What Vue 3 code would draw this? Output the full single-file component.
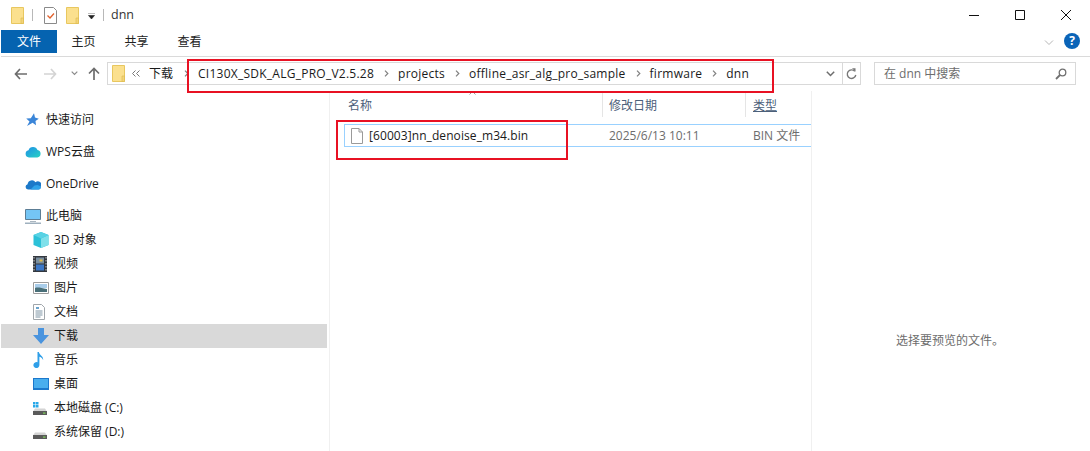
<script setup>
const crumbs = ['CI130X_SDK_ALG_PRO_V2.5.28', 'projects', 'offline_asr_alg_pro_sample', 'firmware', 'dnn']
const tabs = ['主页', '共享', '查看']
const thisPc = [
  { key: 'cube', label: '3D 对象' },
  { key: 'video', label: '视频' },
  { key: 'pic', label: '图片' },
  { key: 'doc', label: '文档' },
  { key: 'down', label: '下载', active: true },
  { key: 'music', label: '音乐' },
  { key: 'desk', label: '桌面' },
  { key: 'c', label: '本地磁盘 (C:)' },
  { key: 'd', label: '系统保留 (D:)' },
]
</script>

<template>
  <div class="win">
    <header class="title">
      <svg class="ti" width="13" height="17" viewBox="0 0 13 17"><path d="M.5.5h12v16H.5z" fill="#fbe08e" stroke="#e8c75f"/><path d="M10 11h2.500v5.500H10z" fill="#f3d478" stroke="#dcb84f" stroke-width=".6"/></svg>
      <i class="tsep"></i>
      <svg class="ti t2" width="13" height="17" viewBox="0 0 13 17"><path d="M.5.500h9l3 3v13H.5z" fill="#fff" stroke="#8a8a8a"/><path d="M3.500 8.500l2.500 2.500 4-4.500" fill="none" stroke="#e2602b" stroke-width="1.300"/></svg>
      <svg class="ti t3" width="13" height="17" viewBox="0 0 13 17"><path d="M.5.5h12v16H.5z" fill="#fbe08e" stroke="#e8c75f"/><path d="M10 11h2.500v5.500H10z" fill="#f3d478" stroke="#dcb84f" stroke-width=".6"/></svg>
      <svg class="ti t4" width="7" height="6" viewBox="0 0 7 6"><path d="M0 0h7M.5 2.500h6L3.500 6z" fill="#222" stroke="#222" stroke-width=".6"/></svg>
      <i class="tsep s2"></i>
      <span class="tname">dnn</span>
      <span class="grow"></span>
      <div class="wbtns">
        <svg width="12" height="12" viewBox="0 0 12 12"><path d="M1 6.500h10" stroke="#111"/></svg>
        <svg width="12" height="12" viewBox="0 0 12 12"><path d="M1.500 1.500h9v9h-9z" fill="none" stroke="#111"/></svg>
        <svg width="12" height="12" viewBox="0 0 12 12"><path d="M1 1l10 10M11 1L1 11" stroke="#111" stroke-width="1"/></svg>
      </div>
    </header>

    <nav class="tabs">
      <span class="file-tab">文件</span>
      <span v-for="t in tabs" :key="t" class="tab">{{ t }}</span>
      <span class="grow"></span>
      <svg class="collapse" width="10" height="6" viewBox="0 0 10 6"><path d="M1 .5l4 4 4-4" fill="none" stroke="#b5b5b5"/></svg>
      <span class="help">?</span>
    </nav>

    <div class="addr-row">
      <div class="navs">
        <svg width="13" height="12" viewBox="0 0 13 12"><path d="M6 1L1.500 6 6 11M2 6h11" fill="none" stroke="#6d6d6d" stroke-width="1.700"/></svg>
        <svg class="fw" width="13" height="12" viewBox="0 0 13 12"><path d="M7 1l4.500 5L7 11M11 6H0" fill="none" stroke="#d4d4d4" stroke-width="1.700"/></svg>
        <svg class="dd" width="7" height="5" viewBox="0 0 7 5"><path d="M.7.700l2.800 2.800L6.300.7" fill="none" stroke="#8a8a8a" stroke-width="1.200"/></svg>
        <svg class="up" width="12" height="13" viewBox="0 0 12 13"><path d="M1 6.500L6 1.500l5 5M6 2v11" fill="none" stroke="#6d6d6d" stroke-width="1.700"/></svg>
      </div>
      <div class="addr">
        <svg class="afold" width="13" height="17" viewBox="0 0 13 17"><path d="M.5.5h12v16H.5z" fill="#fbe08e" stroke="#e8c75f"/><path d="M10 11h2.500v5.500H10z" fill="#f3d478" stroke="#dcb84f" stroke-width=".6"/></svg>
        <svg class="more" width="8" height="7" viewBox="0 0 8 7"><path d="M3.500.5l-3 3 3 3M7.500.5l-3 3 3 3" fill="none" stroke="#777" stroke-width="1"/></svg>
        <span class="crumb first">下载</span>
        <template v-for="c in crumbs" :key="c">
          <svg class="chev" width="5" height="7" viewBox="0 0 5 7"><path d="M1 .7l2.800 2.800L1 6.300" fill="none" stroke="#808080" stroke-width="1.200"/></svg>
          <span class="crumb">{{ c }}</span>
        </template>
        <span class="grow"></span>
        <svg class="addr-dd" width="9" height="6" viewBox="0 0 9 6"><path d="M.8.800L4.500 4.500 8.200.8" fill="none" stroke="#6d6d6d" stroke-width="1.500"/></svg>
        <span class="refresh">
          <svg width="11" height="12" viewBox="0 0 11 12"><path d="M8.800 3.300A4.300 4.300 0 1 0 9.800 7" fill="none" stroke="#777" stroke-width="1.400"/><path d="M6 .3l3.500 0v3.500z" fill="#777"/></svg>
        </span>
      </div>
      <div class="search">
        <span>在 dnn 中搜索</span>
        <svg width="12" height="12" viewBox="0 0 12 12"><circle cx="7.500" cy="4.500" r="3.300" fill="none" stroke="#707070" stroke-width="1.300"/><path d="M5 7l-4 4" stroke="#707070" stroke-width="1.800"/></svg>
      </div>
    </div>

    <div class="main">
      <aside class="side">
        <div class="row top">
          <svg class="ic" width="14" height="14" viewBox="0 0 14 14"><path d="M9 .3l1 4.200 3.800 1.200-3.300 2.300.5 4.300-3.400-2.600L2 13l2.500-4.500L1.200 5.400l4.600-.2z" fill="#3a85d8"/></svg>
          <span>快速访问</span>
        </div>
        <div class="row top">
          <svg class="ic" width="16" height="14" viewBox="0 0 16 14"><defs><linearGradient id="wps" x1="0" y1="0" x2="1" y2="1"><stop offset="0" stop-color="#1f8fe8"/><stop offset="1" stop-color="#27d3c3"/></linearGradient></defs><path d="M4 12.500a3.700 3.700 0 0 1-.5-7.300A4.800 4.800 0 0 1 12.500 5a3.800 3.800 0 0 1-.2 7.500z" fill="url(#wps)"/></svg>
          <span>WPS云盘</span>
        </div>
        <div class="row top">
          <svg class="ic" width="16" height="11" viewBox="0 0 16 11"><path d="M3 10.500a2.700 2.700 0 0 1-.4-5.300A4.300 4.300 0 0 1 10.500 3.300 3.400 3.400 0 0 1 15.800 7.500c.3 1.500-.6 3-2.300 3z" fill="#1c79c9"/><path d="M5.500 10.500L9.500 6.500l3-.5 3.300 1.500c.3 1.500-.6 3-2.300 3z" fill="#2fa3ea"/></svg>
          <span>OneDrive</span>
        </div>
        <div class="row top">
          <svg class="ic" width="16" height="15" viewBox="0 0 16 15"><path d="M.5.500h15v10H.5z" fill="#74c5f5" stroke="#5c7d95"/><path d="M5 12h6v1H5z" fill="#aab6c0"/><path d="M0 13.500h16V15H0z" fill="#9fb0be"/></svg>
          <span>此电脑</span>
        </div>
        <div v-for="it in thisPc" :key="it.key" class="row sub" :class="{ active: it.active }">
          <svg v-if="it.key === 'cube'" class="ic" width="16" height="16" viewBox="0 0 16 16"><path d="M8 0l7.500 3v10L8 16 .5 13V3z" fill="#2cc1d8"/><path d="M8 6.500L15.500 3v10L8 16z" fill="#7fe0ea"/><path d="M8 0l7.500 3L8 6.500.5 3z" fill="#58d2e4"/></svg>
          <svg v-else-if="it.key === 'video'" class="ic" width="14" height="16" viewBox="0 0 14 16"><path d="M0 0h14v16H0z" fill="#33383f"/><path d="M3 1.500h8v6H3z" fill="#7a8fa0"/><path d="M3 8.500h8v6H3z" fill="#3c78c8"/><path d="M1 1v14M13 1v14" stroke="#c9c9c9" stroke-dasharray="1.500 1.500"/><path d="M6.500 3.500h3v2h-3z" fill="#e0bb49"/></svg>
          <svg v-else-if="it.key === 'pic'" class="ic" width="16" height="12" viewBox="0 0 16 12"><path d="M.5.500h15v11H.5z" fill="#fff" stroke="#9c9c9c"/><path d="M2 2h12v4H2z" fill="#a9cdea"/><path d="M2 6c3-1 6 0 12 1v3H2z" fill="#496f78"/></svg>
          <svg v-else-if="it.key === 'doc'" class="ic" width="12" height="16" viewBox="0 0 12 16"><path d="M.5.500h8l3 3v12H.5z" fill="#fff" stroke="#a0a6ab"/><path d="M3 3h3v2H3z" fill="#6aa3cc"/><path d="M2.500 7h7M2.500 9h7M2.500 11h7M2.500 13h5" stroke="#7e95a5"/></svg>
          <svg v-else-if="it.key === 'down'" class="ic" width="16" height="16" viewBox="0 0 16 16"><path d="M5 0h6v7h5l-8 9-8-9h5z" fill="#4a94de"/></svg>
          <svg v-else-if="it.key === 'music'" class="ic" width="11" height="16" viewBox="0 0 11 16"><path d="M4.500 0h1.400c.3 3 4.800 4 4.200 8-.6-2-2.600-3-3.700-3.200V13a3 3 0 1 1-1.900-2.700z" fill="#2f9fe8"/></svg>
          <svg v-else-if="it.key === 'desk'" class="ic" width="16" height="12" viewBox="0 0 16 12"><path d="M0 0h16v12H0z" fill="#1c78cc"/><path d="M1 1h14v9H1z" fill="#49aeee"/></svg>
          <svg v-else class="ic" width="14" height="13" viewBox="0 0 14 13"><path v-if="it.key === 'c'" d="M0 0h2.500v2.500H0zM3 0h2.500v2.500H3zM0 3h2.500v2.500H0zM3 3h2.500v2.500H3z" fill="#28a8e8"/><path d="M2 6.500h10l2 3H0z" fill="#d4d4d4"/><path d="M0 9h14v4H0z" fill="#5a5a5a"/><path d="M10 10.500h2.500v1.200H10z" fill="#7ed35a"/></svg>
          <span>{{ it.label }}</span>
        </div>
      </aside>

      <section class="list">
        <div class="heads">
          <span class="head name">名称</span>
          <span class="head date">修改日期</span>
          <span class="head type"><u>类型</u></span>
        </div>
        <div class="file">
          <svg width="12" height="16" viewBox="0 0 12 16"><path d="M.5.500h7.500l3.500 3.500v11.500H.5z" fill="#fff" stroke="#9a9a9a"/><path d="M8 .5V4h3.500" fill="none" stroke="#9a9a9a"/></svg>
          <span class="fname">[60003]nn_denoise_m34.bin</span>
          <span class="fdate">2025/6/13 10:11</span>
          <span class="ftype">BIN 文件</span>
        </div>
        <svg class="caret" width="7" height="4" viewBox="0 0 7 4"><path d="M.5 3.500l3-3 3 3" fill="none" stroke="#9a9a9a"/></svg>
      </section>

      <section class="preview">
        <span>选择要预览的文件。</span>
      </section>
    </div>

    <div class="mark mark-a"></div>
    <div class="mark mark-b"></div>
  </div>
</template>

<style scoped>
.win {
  position: relative;
  width: 1090px;
  height: 451px;
  overflow: hidden;
  background: #fff;
  color: #1a1a1a;
  font: 12px/16px "Open Sans", "Noto Sans CJK SC", sans-serif;
}
.grow { flex: 1; }
svg { display: block; flex: none; }

.title { height: 30px; display: flex; align-items: center; padding-left: 11px; }
.tsep { width: 1px; height: 12px; background: #b8b8b8; margin: 0 11px 0 8px; }
.t3 { margin-left: 9px; }
.t4 { margin-left: 9px; margin-top: 2px; }
.tsep.s2 { margin: 0 7px 0 8px; }
.tname { font-size: 12.500px; color: #333; }
.wbtns { display: flex; gap: 34px; margin-right: 18px; align-items: center; }

.tabs { height: 26px; margin-left: 1px; display: flex; align-items: flex-start; border-bottom: 1px solid #dadada; }
.file-tab { width: 56px; height: 23px; background: #0563b0; color: #fff; text-align: center; line-height: 24px; }
.tab { width: 53px; height: 23px; text-align: center; line-height: 24px; color: #222; }
.collapse { margin: 10px 10px 0 0; }
.help { width: 16px; height: 16px; border-radius: 50%; background: #0a64b8; color: #fff; font-weight: 700; font-size: 12px; line-height: 16px; text-align: center; margin: 3px 10px 0 0; }

.addr-row { height: 23px; margin-top: 5px; display: flex; align-items: stretch; }
.navs { width: 107px; display: flex; align-items: center; padding-left: 14px; box-sizing: border-box; }
.fw { margin-left: 17px; }
.dd { margin-left: 14px; }
.up { margin-left: 10px; }
.addr { width: 754px; box-sizing: border-box; border: 1px solid #d9d9d9; display: flex; align-items: center; }
.afold { margin-left: 4px; }
.more { margin-left: 7px; }
.crumb { color: #1a1a1a; letter-spacing: .25px; }
.crumb.first { margin: 0 1px 0 9px; letter-spacing: 0; }
.chev { margin: 0 9px 0 10px; }
.addr-dd { margin-right: 7px; }
.refresh { width: 17px; height: 100%; border-left: 1px solid #d9d9d9; display: flex; align-items: center; justify-content: center; }
.search { width: 202px; box-sizing: border-box; margin-left: 13px; border: 1px solid #d9d9d9; display: flex; align-items: center; justify-content: space-between; padding: 0 8px 0 9px; color: #6d6d6d; }

.main { display: flex; height: 366px; margin-top: 6px; }
.side { width: 327px; margin-left: 1px; padding-top: 17px; }
.row { height: 24px; display: flex; align-items: center; position: relative; }
.row span { position: absolute; }
.top { margin-bottom: 8px; }
.row.top:nth-child(4) { margin-bottom: 0; }
.top .ic { margin-left: 24px; }
.top span { left: 45px; }
.sub { width: 326px; }
.sub .ic { margin-left: 32px; }
.sub span { left: 53px; }
.active { background: #d9d9d9; }

.list { width: 481px; margin-left: 1px; border-left: 1px solid #f0f0f0; border-right: 1px solid #f0f0f0; position: relative; }
.heads { height: 27px; display: flex; }
.head { height: 26px; box-sizing: border-box; color: #4c607a; line-height: 30px; border-right: 1px solid #e5e5e5; padding-left: 6px; }
.name { width: 273px; padding-left: 18px; }
.date { width: 143px; }
.type { width: 64px; border-right: 0; padding-left: 7px; }
.file { margin: 6px 0 0 14px; height: 23px; box-sizing: border-box; border: 1px solid #99d1ff; border-right: 0; display: flex; align-items: center; padding-left: 6px; }
.fname { width: 240px; margin-left: 6px; color: #1a1a1a; letter-spacing: .08px; }
.fdate { width: 144px; color: #6d6d6d; }
.ftype { color: #6d6d6d; white-space: nowrap; }
.caret { position: absolute; left: 139px; top: 0; }

.preview { flex: 1; display: flex; align-items: center; justify-content: center; color: #6d6d6d; padding: 134px 2px 0 0; box-sizing: border-box; }

.mark { position: absolute; border: 2px solid #e81123; box-sizing: border-box; }
.mark-a { left: 187px; top: 59px; width: 587px; height: 34px; }
.mark-b { left: 336px; top: 120px; width: 232px; height: 40px; }
</style>

<style>
html, body { margin: 0; overflow: hidden; background: #fff; }
</style>
